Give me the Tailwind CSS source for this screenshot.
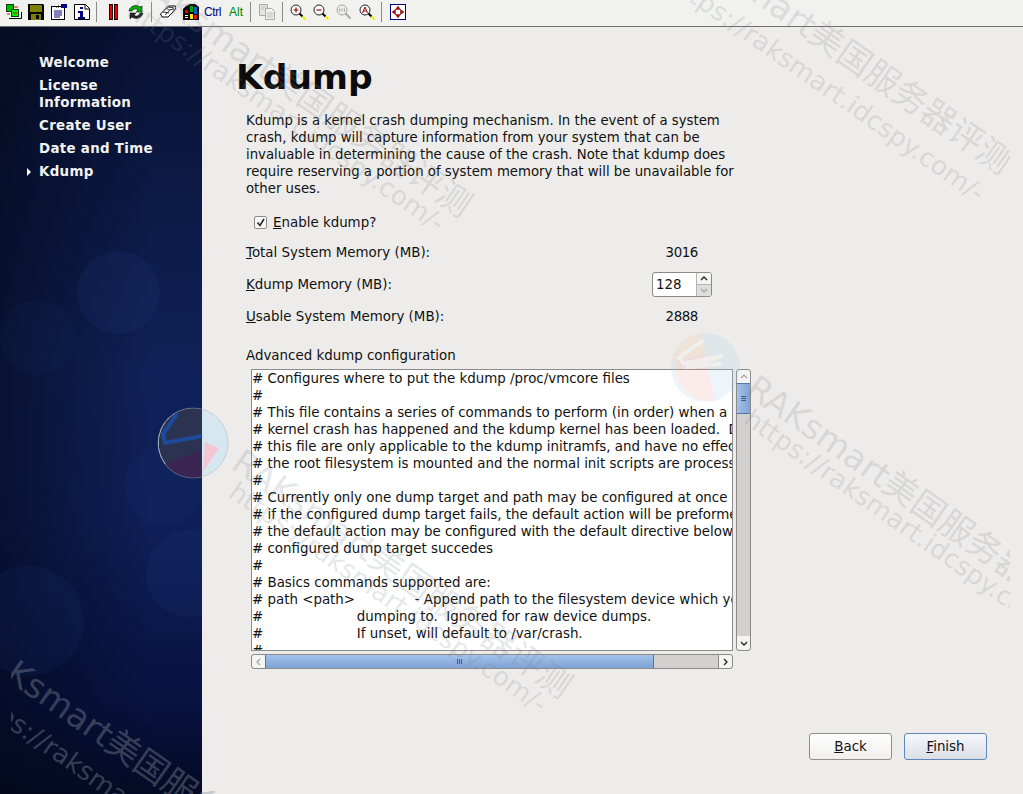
<!DOCTYPE html>
<html lang="en">
<head>
    <meta charset="UTF-8">
    <title>Kdump</title>
    <script src="https://cdn.jsdelivr.net/npm/@tailwindcss/browser@4"></script>
</head>
<body class="w-[1023px] h-[794px] overflow-hidden relative bg-[#edecea] text-[#111] font-['DejaVu_Sans','Noto_Sans_CJK_SC',sans-serif] text-[13.4px] leading-[17px]">

    <!-- vnc toolbar -->
    <div class="h-[27px] bg-[#f1f1ef] border-b border-[#6f6f6f] flex items-center pl-[6px] pb-[2px]">
        <svg viewBox="0 0 16 16" class="w-4 h-4 shrink-0"><path d="M3 14.500h12.500V8" fill="none" stroke="#000"/><rect x=".5" y=".5" width="7" height="7" fill="#0b0" stroke="#040"/><rect x="5.500" y="5.500" width="7" height="7" fill="#0e0" stroke="#040"/><path d="M8 3h4M1 10h3M7 9h4" stroke="#e00"/></svg>
        <svg viewBox="0 0 16 16" class="w-4 h-4 shrink-0 ml-[6px]"><path d="M0 0h15l1 1v15H0z" fill="#000"/><rect x="2" y="1" width="12" height="7" fill="#808000"/><rect x="3" y="10" width="10" height="6" fill="#808000"/><rect x="8" y="11" width="3" height="4" fill="#000"/></svg>
        <svg viewBox="0 0 16 16" class="w-4 h-4 shrink-0 ml-[7px]"><rect x=".5" y="2.500" width="13" height="13" fill="#fff" stroke="#000"/><path d="M3 7h8M3 9h8M3 11h8M3 13h6" stroke="#000080"/><path d="M5 3h1v1H5zM7 1h1v1H7zM7 3h1v1H7z" fill="#777"/><rect x="10" y="0" width="6" height="4" fill="#000080"/></svg>
        <svg viewBox="0 0 16 16" class="w-4 h-4 shrink-0 ml-[7px]"><path d="M.5.500h11l4 4v11H.5z" fill="#fff" stroke="#000"/><path d="M11 1v4h4" fill="none" stroke="#000"/><rect x="6" y="3" width="3" height="2" fill="#000080"/><path d="M4 7h5v6h2v2H4v-2h2V9H4z" fill="#000080"/></svg>
        <div class="w-px h-[20px] bg-[#8a8a8a] ml-[6px] shrink-0"></div>
        <svg viewBox="0 0 16 16" class="w-4 h-4 shrink-0 ml-[8px]"><rect x="4.500" y=".5" width="3" height="15" fill="#e00" stroke="#200"/><rect x="9.500" y=".5" width="3" height="15" fill="#e00" stroke="#200"/></svg>
        <svg viewBox="0 0 16 16" class="w-4 h-4 shrink-0 ml-[7px]"><path d="M1 7C2 2 8 0 12 3l2-1v6H8l2-2C8 4 5 5 4 7z" fill="#0a0" stroke="#030" stroke-width=".7"/><path d="M15 9c-1 5-7 7-11 4l-2 2V9h6l-2 2c2 2 5 1 6-2z" fill="#222" stroke="#000" stroke-width=".5"/></svg>
        <div class="w-px h-[20px] bg-[#8a8a8a] ml-[7px] shrink-0"></div>
        <svg viewBox="0 0 16 16" class="w-4 h-4 shrink-0 ml-[8px]"><path d="M.5 10l5-5 3-3h7l.5 2-3 4-5 5H2z" fill="#fff" stroke="#000"/><path d="M6 4l3 2M3 8l6 1M8 3l6 1M5 11l5-5M9 6l5-1" stroke="#333" fill="none"/></svg>
        <svg viewBox="0 0 16 16" class="w-4 h-4 shrink-0 ml-[7px]"><path d="M0 5l3-3 4-2h5l4 3v13H0z" fill="#000"/><path d="M2 6h3v3H2z" fill="#e00"/><path d="M7 2h3v6H7z" fill="#0a0"/><path d="M11 3h3v7h-3z" fill="#06c"/><path d="M7 10h3v5H7z" fill="#ee0"/><path d="M11 11h3v4h-3z" fill="#e00"/><path d="M2 11h3v1H2zM2 13h3v1H2z" fill="#fff"/></svg>
        <span class="w-[17px] ml-[5px] shrink-0 whitespace-nowrap font-['Liberation_Sans',sans-serif] text-[12px] tracking-[-0.4px] text-[#000080]">Ctrl</span>
        <span class="w-[14px] ml-[8px] shrink-0 whitespace-nowrap font-['Liberation_Sans',sans-serif] text-[12px] text-[#008000]">Alt</span>
        <div class="w-px h-[20px] bg-[#8a8a8a] ml-[7px] shrink-0"></div>
        <svg viewBox="0 0 16 16" class="w-4 h-4 shrink-0 ml-[8px]"><path d="M.5.500h8v11h-8z" fill="#e6e6e4" stroke="#a8a8a8"/><path d="M6.500 4.500h6l3 3v8h-9z" fill="#f2f2f0" stroke="#a8a8a8"/><path d="M2 3h5M2 5h3M8 9h6M8 11h6M8 13h6" stroke="#bbb"/></svg>
        <div class="w-px h-[20px] bg-[#8a8a8a] ml-[7px] shrink-0"></div>
        <svg viewBox="0 0 16 16" class="w-4 h-4 shrink-0 ml-[7px]"><circle cx="6" cy="6" r="5" fill="#fff" stroke="#222"/><path d="M3.500 6h5M6 3.500v5" stroke="#900" stroke-width="1.200"/><path d="M9.500 9.500l3 3" stroke="#000" stroke-width="2"/><path d="M12.500 12.500l3 3" stroke="#ee0" stroke-width="2"/></svg>
        <svg viewBox="0 0 16 16" class="w-4 h-4 shrink-0 ml-[7px]"><circle cx="6" cy="6" r="5" fill="#fff" stroke="#222"/><path d="M3.500 6h5" stroke="#900" stroke-width="1.200"/><path d="M9.500 9.500l3 3" stroke="#000" stroke-width="2"/><path d="M12.500 12.500l3 3" stroke="#ee0" stroke-width="2"/></svg>
        <svg viewBox="0 0 16 16" class="w-4 h-4 shrink-0 ml-[7px]"><circle cx="6" cy="6" r="5" fill="#ececea" stroke="#a8a8a8"/><path d="M3.500 4.500v3M6 4.500v3M8.500 4.500v3" stroke="#a8a8a8"/><path d="M9.500 9.500l5 5" stroke="#a8a8a8" stroke-width="2"/></svg>
        <svg viewBox="0 0 16 16" class="w-4 h-4 shrink-0 ml-[7px]"><circle cx="6" cy="6" r="5" fill="#fff" stroke="#222"/><path d="M3.500 9L6 3l2.500 6M4.500 7h3" fill="none" stroke="#900"/><path d="M9.500 9.500l3 3" stroke="#000" stroke-width="2"/><path d="M12.500 12.500l3 3" stroke="#ee0" stroke-width="2"/></svg>
        <div class="w-px h-[20px] bg-[#8a8a8a] ml-[6px] shrink-0"></div>
        <svg viewBox="0 0 16 16" class="w-4 h-4 shrink-0 ml-[8px]"><rect x=".5" y=".5" width="15" height="15" fill="#fff" stroke="#000080"/><path d="M8 2l2.500 3.500h-5zM8 14l-2.500-3.500h5zM2 8l3.500-2.500v5zM14 8l-3.500 2.500v-5z" fill="#c00" stroke="#300" stroke-width=".4"/></svg>
    </div>

    <div class="flex h-[767px]">
        <!-- sidebar -->
        <aside class="w-[202px] shrink-0 h-full relative overflow-hidden bg-[linear-gradient(180deg,#081233_0%,#0f2158_45%,#0e1f58_65%,#071240_88%,#040a24_100%)]">
            <div class="absolute inset-0 bg-[linear-gradient(90deg,#03081899_0%,#03081800_75%)]"></div>
            <div class="absolute left-[77px] top-[224px] w-[83px] h-[83px] rounded-full bg-[#1d3678]/20"></div>
            <div class="absolute left-0 top-[273px] w-[75px] h-[76px] rounded-full bg-[#1d3678]/10"></div>
            <div class="absolute left-[124px] top-[419px] w-[80px] h-[80px] rounded-full bg-[#1d3678]/15"></div>
            <div class="absolute left-[146px] top-[503px] w-[87px] h-[87px] rounded-full bg-[#1d3678]/20"></div>
            <div class="absolute left-[-26px] top-[539px] w-[110px] h-[110px] rounded-full bg-[#1d3678]/15"></div>
            <ul class="relative pl-[39px] pt-[27px] flex flex-col gap-[6px] font-bold text-[#f2f2f2] tracking-[0.3px]">
                <li>Welcome</li>
                <li>License<br>Information</li>
                <li>Create User</li>
                <li>Date and Time</li>
                <li class="relative">
                    <svg viewBox="0 0 6 8" class="absolute left-[-13px] top-[5px] w-[6px] h-[8px]"><path d="M1 0l4 4-4 4z" fill="#fff"/></svg>
                    Kdump
                </li>
            </ul>
        </aside>

        <!-- page content -->
        <main class="flex-1 relative">
            <h1 class="pl-[34px] pt-[27px] text-[34.500px] leading-[46px] font-bold text-[#0c0c0c]">Kdump</h1>
            <div class="pl-[44px] w-[540px]">
                <p class="mt-[12px] text-[13.270px]">Kdump is a kernel crash dumping mechanism. In the event of a system crash, kdump will capture information from your system that can be invaluable in determining the cause of the crash. Note that kdump does require reserving a portion of system memory that will be unavailable for other uses.</p>

                <label class="flex items-center mt-[17px] ml-[8px] h-[17px]">
                    <span class="w-[13px] h-[13px] bg-[#f8f8f8] border border-[#8b8b8b] rounded-[2px] flex items-center justify-center">
                        <svg viewBox="0 0 11 11" class="w-[11px] h-[11px]"><path d="M2.500 5.500l2.500 3 4-6.500" fill="none" stroke="#222" stroke-width="1.600"/></svg>
                    </span>
                    <span class="ml-[6px]"><span class="underline">E</span>nable kdump?</span>
                </label>

                <div class="mt-[13px] flex items-center h-[17px] justify-between w-[452px]">
                    <span><span class="underline">T</span>otal System Memory (MB):</span><span class="tracking-[-0.4px]">3016</span>
                </div>
                <div class="mt-[10px] flex items-center h-[26px] justify-between w-[466px]">
                    <span><span class="underline">K</span>dump Memory (MB):</span>
                    <div class="flex w-[60px] h-[25px] rounded-[3px] border border-[#8b8b8b] bg-white overflow-hidden">
                        <span class="flex-1 pl-[3px] leading-[23px]">128</span>
                        <div class="w-[15px] border-l border-[#b5b5b5] flex flex-col">
                            <div class="h-[11px] bg-[#f4f4f2] flex items-center justify-center"><svg viewBox="0 0 8 5" class="w-[8px] h-[5px]"><path d="M1 4l3-3 3 3" fill="none" stroke="#222" stroke-width="1.300"/></svg></div>
                            <div class="flex-1 bg-[#dededb] border-t border-[#b5b5b5] flex items-center justify-center"><svg viewBox="0 0 8 5" class="w-[8px] h-[5px]"><path d="M1 1l3 3 3-3" fill="none" stroke="#a0a0a0" stroke-width="1.200"/></svg></div>
                        </div>
                    </div>
                </div>
                <div class="mt-[11px] flex items-center h-[17px] justify-between w-[452px]">
                    <span><span class="underline">U</span>sable System Memory (MB):</span><span class="tracking-[-0.4px]">2888</span>
                </div>

                <div class="mt-[22px]">Advanced kdump configuration</div>

                <!-- config text box -->
                <div class="mt-[5px] ml-[5px] w-[500px] grid grid-cols-[482px_15px] gap-x-[3px] gap-y-[3px]">
                    <div class="h-[282px] bg-white border border-[#8b8b8b] overflow-hidden">
                        <pre class="font-['DejaVu_Sans',sans-serif] text-[13.4px] leading-[17px] whitespace-pre"># Configures where to put the kdump /proc/vmcore files
#
# This file contains a series of commands to perform (in order) when a
# kernel crash has happened and the kdump kernel has been loaded.  Directives in
# this file are only applicable to the kdump initramfs, and have no effect if
# the root filesystem is mounted and the normal init scripts are processed
#
# Currently only one dump target and path may be configured at once
# if the configured dump target fails, the default action will be preformed
# the default action may be configured with the default directive below.  If the
# configured dump target succedes
#
# Basics commands supported are:
# path &lt;path&gt;              - Append path to the filesystem device which you are
#                      dumping to.  Ignored for raw device dumps.
#                      If unset, will default to /var/crash.
#</pre>
                    </div>
                    <!-- vertical scrollbar -->
                    <div class="h-[282px] rounded-[3px] border border-[#8b8b8b] bg-[#d2d1cf] flex flex-col">
                        <div class="h-[13px] bg-[#f4f4f2] rounded-t-[3px] flex items-center justify-center"><svg viewBox="0 0 8 5" class="w-[8px] h-[5px]"><path d="M1 4l3-3 3 3" fill="none" stroke="#a0a0a0" stroke-width="1.200"/></svg></div>
                        <div class="h-[31px] bg-[linear-gradient(90deg,#a4c2ea,#7fa3d6)] border-y border-[#4f77ab] flex flex-col items-center justify-center gap-px">
                            <i class="block w-[5px] h-px bg-[#3d5f90]"></i><i class="block w-[5px] h-px bg-[#3d5f90]"></i><i class="block w-[5px] h-px bg-[#3d5f90]"></i>
                        </div>
                        <div class="flex-1"></div>
                        <div class="h-[14px] bg-[#f4f4f2] rounded-b-[3px] flex items-center justify-center"><svg viewBox="0 0 8 5" class="w-[8px] h-[5px]"><path d="M1 1l3 3 3-3" fill="none" stroke="#222" stroke-width="1.300"/></svg></div>
                    </div>
                    <!-- horizontal scrollbar -->
                    <div class="h-[15px] rounded-[3px] border border-[#8b8b8b] bg-[#d2d1cf] flex">
                        <div class="w-[13px] bg-[#f4f4f2] rounded-l-[3px] flex items-center justify-center"><svg viewBox="0 0 5 8" class="w-[5px] h-[8px]"><path d="M4 1L1 4l3 3" fill="none" stroke="#a0a0a0" stroke-width="1.200"/></svg></div>
                        <div class="w-[389px] bg-[linear-gradient(180deg,#a4c2ea,#7fa3d6)] border-x border-[#4f77ab] flex items-center justify-center gap-px">
                            <i class="block w-px h-[5px] bg-[#3d5f90]"></i><i class="block w-px h-[5px] bg-[#3d5f90]"></i><i class="block w-px h-[5px] bg-[#3d5f90]"></i>
                        </div>
                        <div class="flex-1"></div>
                        <div class="w-[14px] bg-[#f4f4f2] border-l border-[#8b8b8b] rounded-r-[3px] flex items-center justify-center"><svg viewBox="0 0 5 8" class="w-[5px] h-[8px]"><path d="M1 1l3 3-3 3" fill="none" stroke="#222" stroke-width="1.300"/></svg></div>
                    </div>
                </div>
            </div>

            <!-- nav buttons -->
            <div class="absolute right-[36px] bottom-[34px] flex gap-[12px]">
                <button class="w-[83px] h-[27px] rounded-[3px] border border-[#8f8f8d] bg-[linear-gradient(180deg,#ffffff,#f0efee)]"><span class="underline">B</span>ack</button>
                <button class="w-[83px] h-[27px] rounded-[3px] border border-[#5f86b8] bg-[linear-gradient(180deg,#f5f7fb,#dcdfe6)]"><span class="underline">F</span>inish</button>
            </div>
        </main>
    </div>

    <!-- watermark overlays -->
    <div class="absolute inset-0 pointer-events-none overflow-hidden">
        <div class="absolute left-[11px] top-0 w-[999px] h-[794px] overflow-hidden text-[#7b8088]/20">
            <div class="absolute left-[677px] top-[-83px] origin-top-left rotate-[35deg] whitespace-nowrap text-[34px] leading-[40px]">RAKsmart美国服务器评测</div>
            <div class="absolute left-[668px] top-[-35px] origin-top-left rotate-[35deg] whitespace-nowrap text-[26px] leading-[30px]">https://raksmart.idcspy.com/-</div>
            <div class="absolute left-[137px] top-[-40px] origin-top-left rotate-[35deg] whitespace-nowrap text-[34px] leading-[40px]">RAKsmart美国服务器评测</div>
            <div class="absolute left-[128px] top-[-5px] origin-top-left rotate-[35deg] whitespace-nowrap text-[26px] leading-[30px]">https://raksmart.idcspy.com/-</div>
            <div class="absolute left-[751px] top-[367px] origin-top-left rotate-[35deg] whitespace-nowrap text-[34px] leading-[40px]">RAKsmart美国服务器评测</div>
            <div class="absolute left-[745px] top-[403px] origin-top-left rotate-[35deg] whitespace-nowrap text-[26px] leading-[30px]">https://raksmart.idcspy.com/-</div>
            <div class="absolute left-[237px] top-[441px] origin-top-left rotate-[35deg] whitespace-nowrap text-[34px] leading-[40px]">RAKsmart美国服务器评测</div>
            <div class="absolute left-[230px] top-[476px] origin-top-left rotate-[35deg] whitespace-nowrap text-[26px] leading-[30px]">https://raksmart.idcspy.com/-</div>
            <div class="absolute left-[11px] top-[652px] origin-top-left rotate-[35deg] whitespace-nowrap text-[34px] leading-[40px] text-[#8a8f9a]/40">Ksmart美国服务器评测</div>
            <div class="absolute left-[-2px] top-[699px] origin-top-left rotate-[35deg] whitespace-nowrap text-[26px] leading-[30px] text-[#8a8f9a]/40">ps://raksmart.idcspy.com/-</div>
        </div>
        <!-- logo marks -->
        <svg viewBox="0 0 72 74" class="absolute left-[157px] top-[406px] w-[72px] h-[74px]">
            <circle cx="36" cy="37" r="35" fill="#d7e7f0"/>
            <path d="M45 3A35 35 0 1 0 45 71z" fill="#2b3350"/>
            <path d="M45 44V71A35 35 0 0 1 8 58z" fill="#3a2452"/>
            <path d="M20 8L6 28l2 9 37-7" fill="none" stroke="#1d4a9a" stroke-width="4"/>
            <path d="M48 36l14 6-16 24z" fill="#f3c6d2"/>
            <circle cx="36" cy="37" r="35" fill="none" stroke="#9aa3b5" stroke-opacity=".4"/>
        </svg>
        <svg viewBox="0 0 72 72" class="absolute left-[670px] top-[331px] w-[71px] h-[73px] opacity-20"><circle cx="36" cy="36" r="35" fill="#a9d2ea"/><path d="M32 1.500A35 35 0 0 0 46 70L36 30z" fill="#f4a0a0"/><path d="M32 1.500A35 35 0 0 0 2 30L36 22z" fill="#f4c08a"/><path d="M34 8L9 26l5 6 40-8-38 12 36-4" fill="none" stroke="#fff" stroke-width="4"/></svg>
    </div>
</body>
</html>
